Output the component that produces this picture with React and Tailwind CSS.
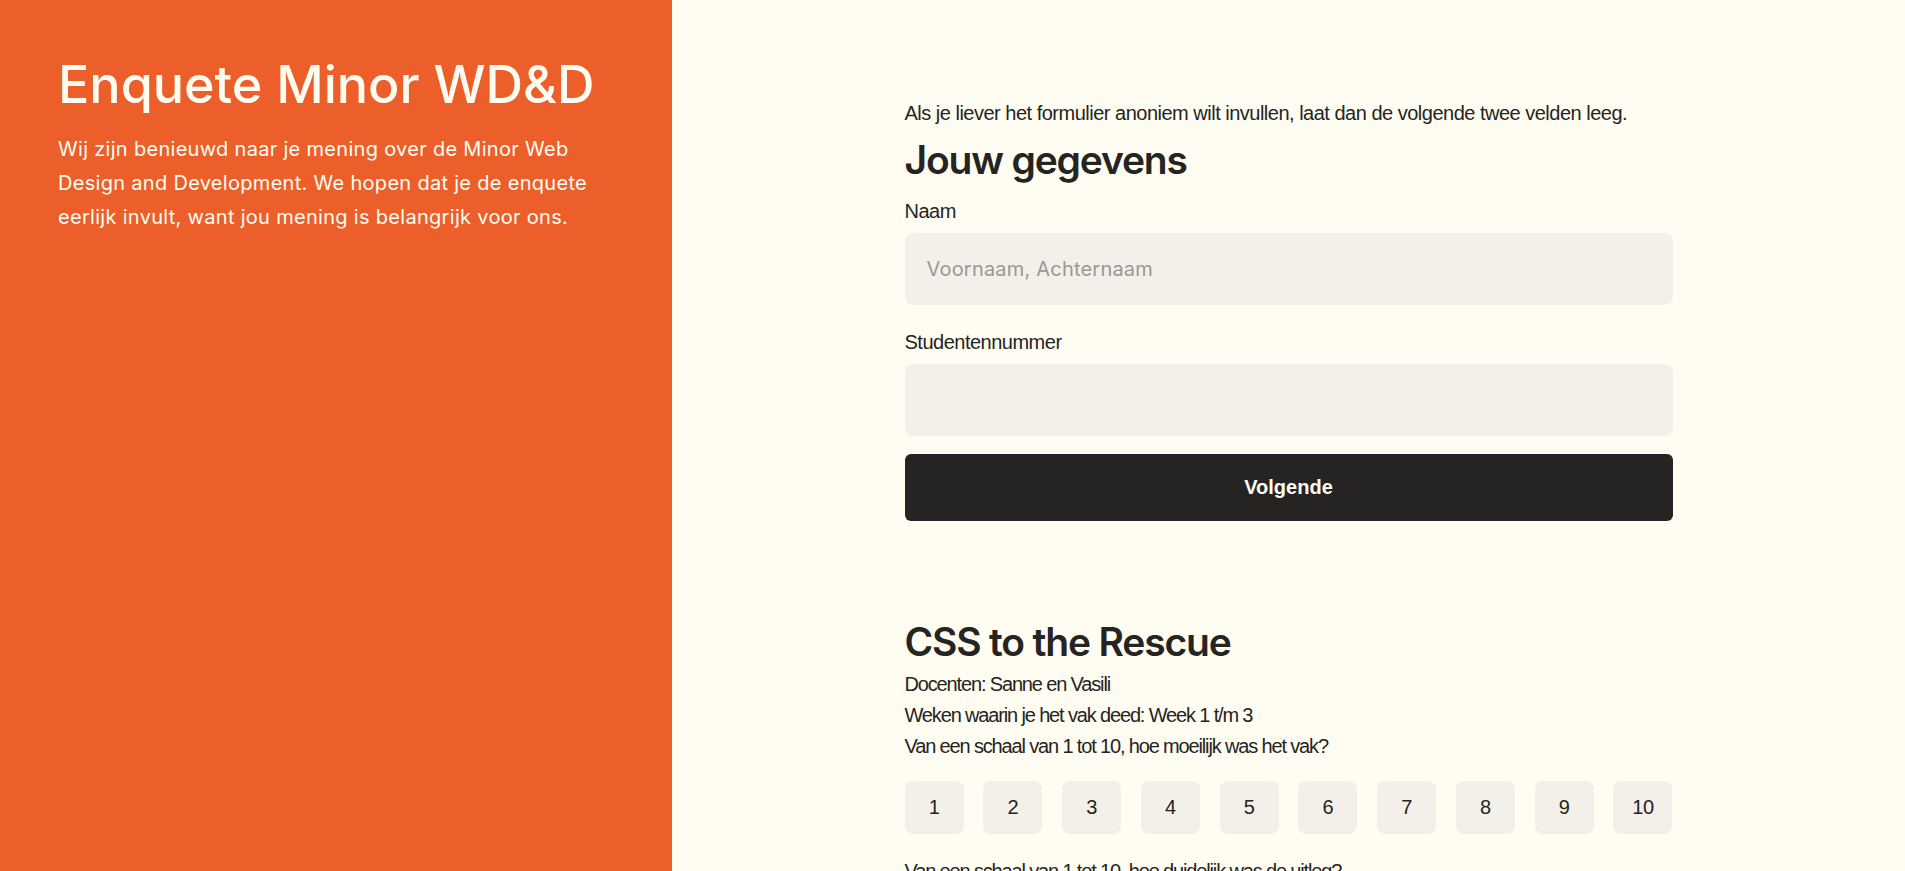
import React from "react";

const base = "font-['Liberation_Sans',Arial,sans-serif] text-[20px] text-[#252422]";
const body = `${base} tracking-[-0.5px]`;
const tight = `${base} tracking-[-1.15px]`;
const heading = "font-[Inter,sans-serif] font-semibold text-[39px] leading-[1.2] tracking-[-0.03em] text-[#252422]";

const Field = ({ label, placeholder, className = "" }) => (
  <div className={className}>
    <label className={`block leading-[28px] mb-2 ${body}`}>{label}</label>
    <input
      type="text"
      placeholder={placeholder}
      className="block w-full h-[72px] rounded-lg bg-[#f3f0ea] px-[22px] font-[Inter,sans-serif] text-[20px] tracking-[0.2px] text-[#252422] placeholder:text-[#9b9892] focus:outline-none"
    />
  </div>
);

const App = () => {
  const scale = [1, 2, 3, 4, 5, 6, 7, 8, 9, 10];

  return (
    <div className="flex h-screen overflow-hidden bg-[#fffdf2]">
      {/* Intro */}
      <aside className="w-[672px] shrink-0 bg-[#ec5f2a] pl-[58px] pr-[50px] pt-[54px] text-[#fffdf2]">
        <h1 className="font-[Inter,sans-serif] font-medium text-[52px] leading-[1.2]">
          Enquete Minor WD&amp;D
        </h1>
        <p className="mt-[16px] font-[Inter,sans-serif] text-[20px] leading-[34px] tracking-[0.3px]">
          Wij zijn benieuwd naar je mening over de Minor Web Design and
          Development. We hopen dat je de enquete eerlijk invult, want jou
          mening is belangrijk voor ons.
        </p>
      </aside>

      {/* Form */}
      <main className="flex-1">
        <form className="mx-auto w-[768px] pt-[99px]">
          <p className={`leading-[28px] ${body}`}>
            Als je liever het formulier anoniem wilt invullen, laat dan de volgende twee velden leeg.
          </p>
          <h2 className={`mt-[10px] ${heading}`}>Jouw gegevens</h2>

          <Field label="Naam" placeholder="Voornaam, Achternaam" className="mt-[13px]" />
          <Field label="Studentennummer" className="mt-[23px]" />

          <button
            type="button"
            className="mt-[18px] w-full h-[67px] rounded-md bg-[#252422] font-['Liberation_Sans',Arial,sans-serif] font-bold text-[20px] text-[#fffdf2]"
          >
            Volgende
          </button>

          <section className="mt-[98px]">
            <h2 className={heading}>CSS to the Rescue</h2>
            <div className={`mt-[3px] leading-[31px] ${tight}`}>
              <p>Docenten: Sanne en Vasili</p>
              <p>Weken waarin je het vak deed: Week 1 t/m 3</p>
              <p>Van een schaal van 1 tot 10, hoe moeilijk was het vak?</p>
            </div>
            <div className="mt-[19px] flex justify-between">
              {scale.map((n) => (
                <button
                  key={n}
                  type="button"
                  className={`w-[59px] h-[53px] rounded-lg bg-[#f3f0ea] ${body} text-[#333]`}
                >
                  {n}
                </button>
              ))}
            </div>
            <p className={`mt-[22px] leading-[31px] ${tight}`}>
              Van een schaal van 1 tot 10, hoe duidelijk was de uitleg?
            </p>
          </section>
        </form>
      </main>
    </div>
  );
};

export default App;
